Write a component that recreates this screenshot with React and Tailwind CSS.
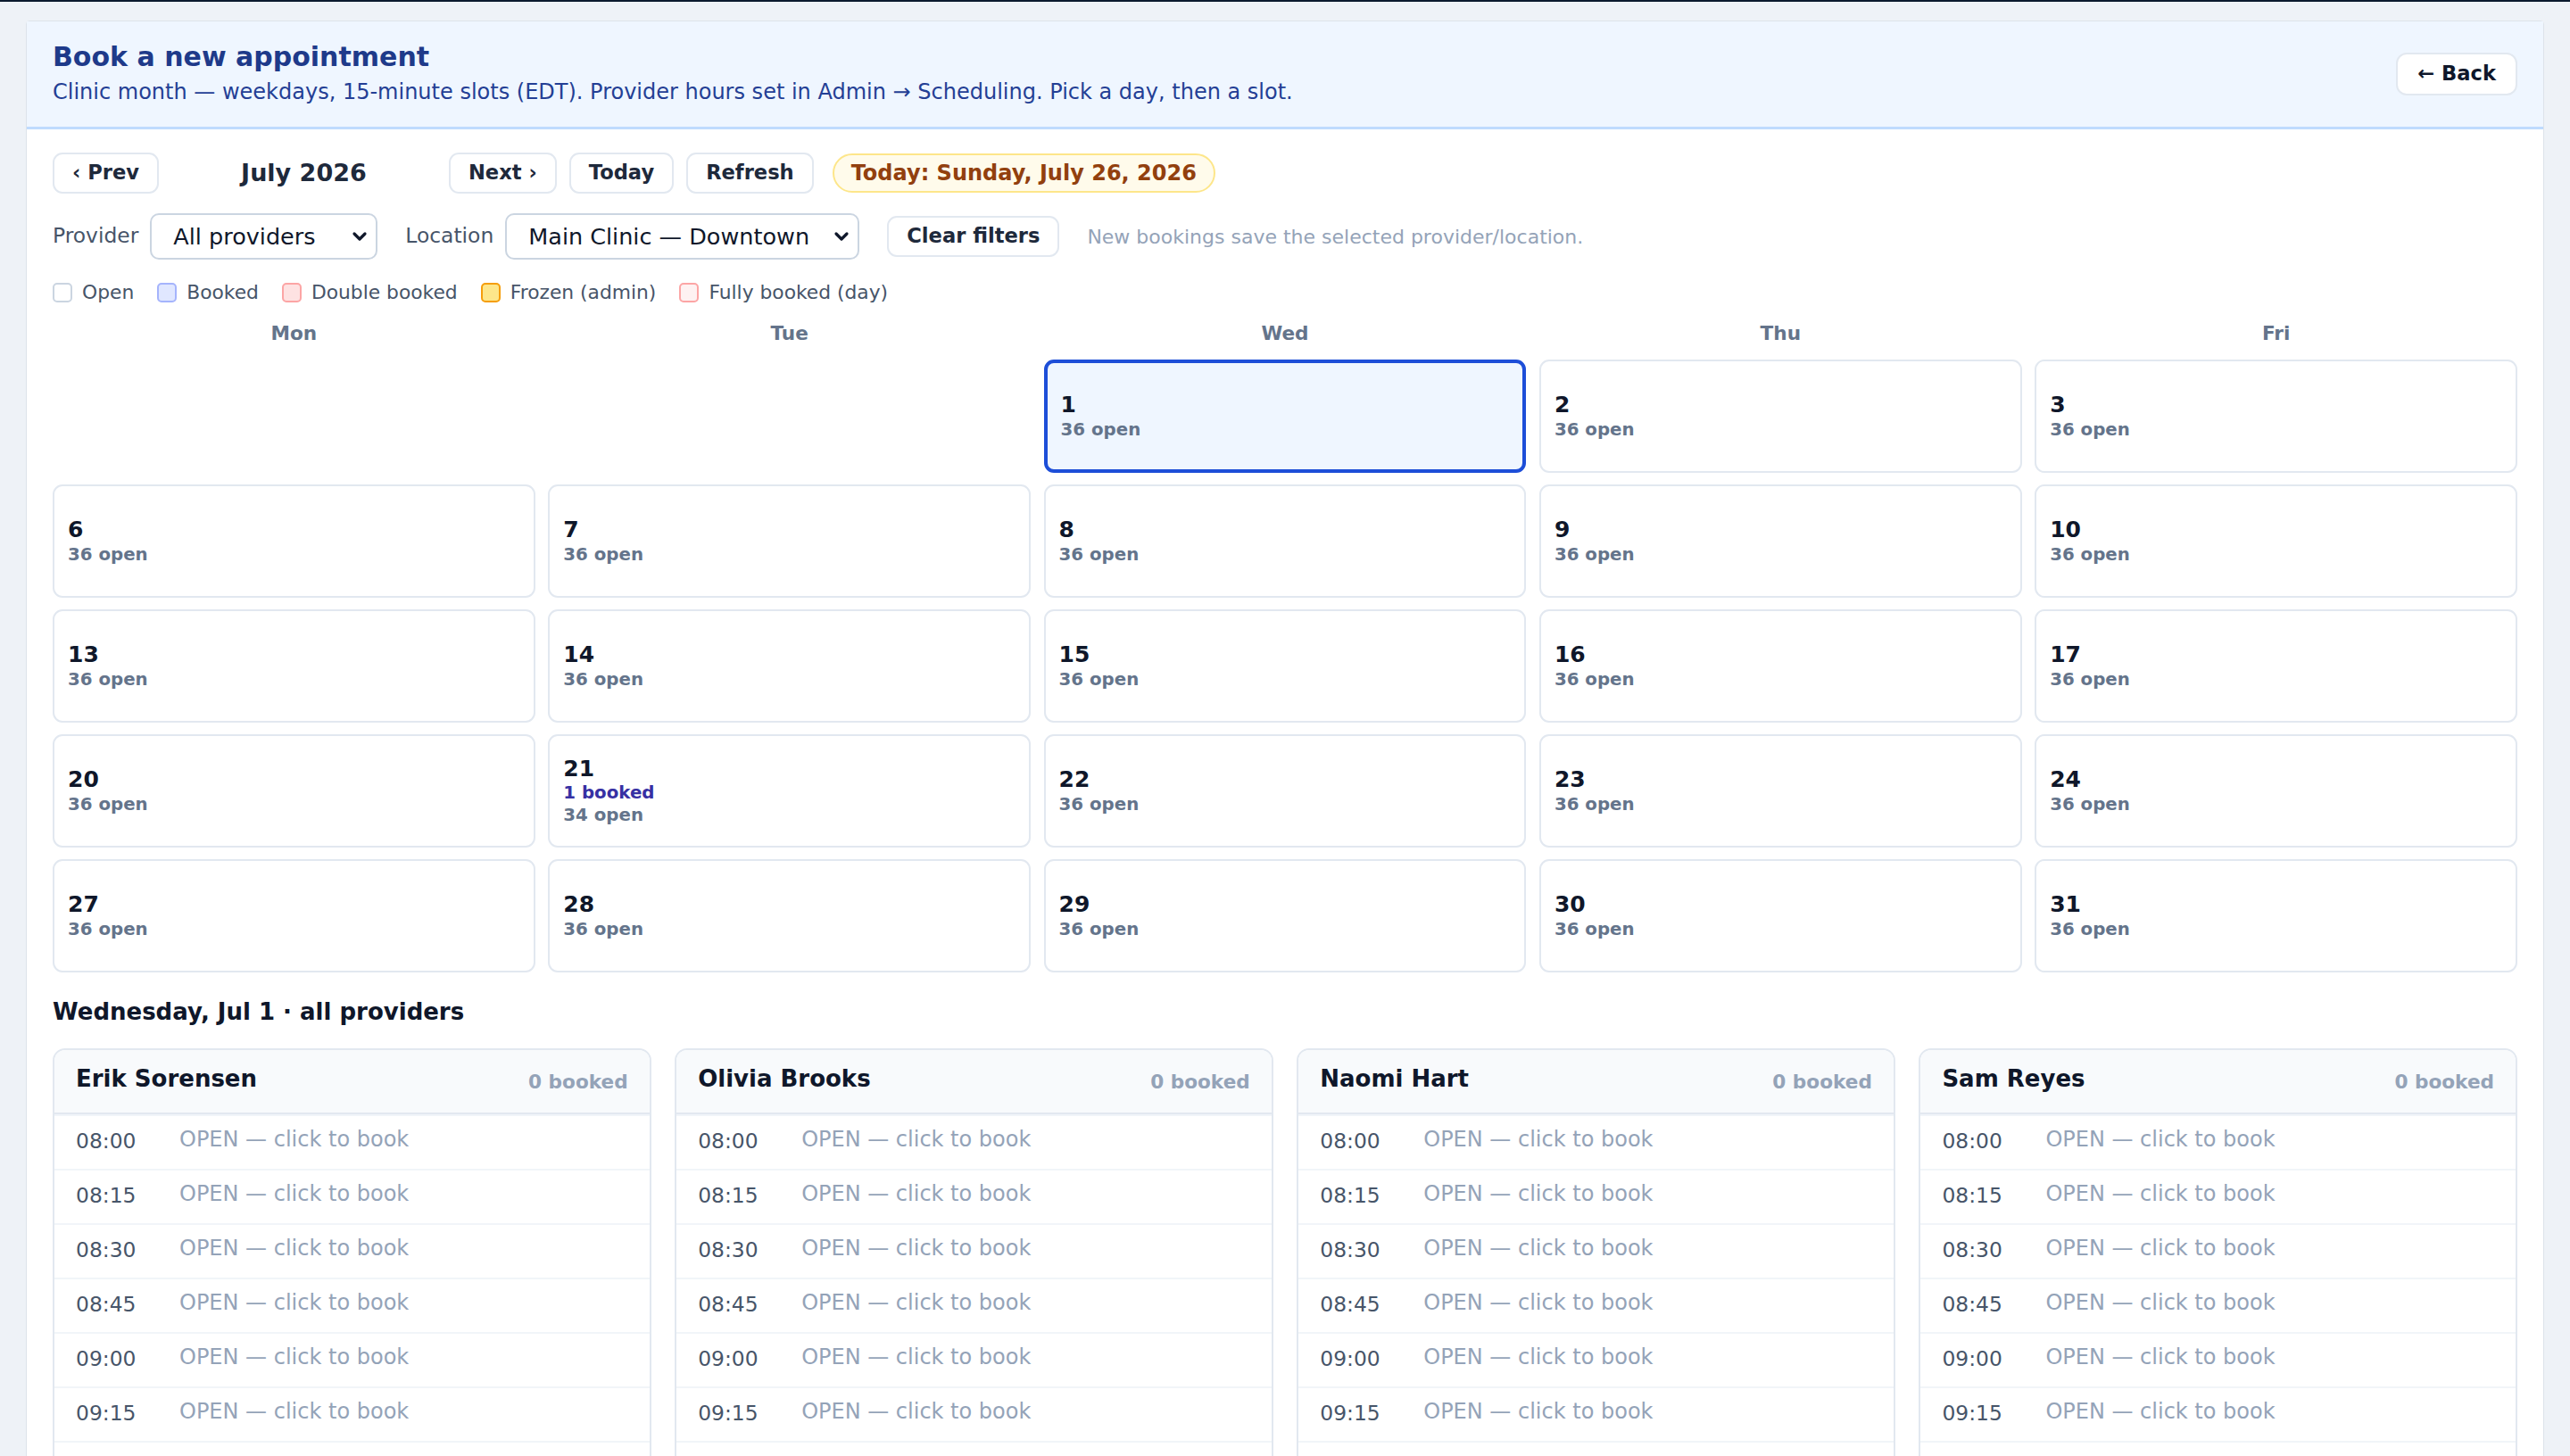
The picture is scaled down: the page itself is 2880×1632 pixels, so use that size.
import { useState } from "react";

const weeks = [
  [null, null, 1, 2, 3],
  [6, 7, 8, 9, 10],
  [13, 14, 15, 16, 17],
  [20, 21, 22, 23, 24],
  [27, 28, 29, 30, 31],
];

const dayNames = ["Mon", "Tue", "Wed", "Thu", "Fri"];
const providers = ["Erik Sorensen", "Olivia Brooks", "Naomi Hart", "Sam Reyes"];

const slots = [];
for (let m = 8 * 60; m < 17 * 60; m += 15) {
  const h = String(Math.floor(m / 60)).padStart(2, "0");
  const mm = String(m % 60).padStart(2, "0");
  slots.push(`${h}:${mm}`);
}

function Chevron() {
  return (
    <svg width="20" height="14" viewBox="0 0 20 14" className="shrink-0">
      <polyline points="4,4 10,10 16,4" fill="none" stroke="#0f172a" strokeWidth="3.2" strokeLinecap="round" strokeLinejoin="round" />
    </svg>
  );
}

function Select({ value, className }) {
  return (
    <div className={`h-[52px] flex items-center justify-between pl-[24px] pr-[8px] border-2 border-[#cbd5e1] rounded-[10px] bg-white text-[25.5px] text-[#0f172a] ${className}`}>
      <span>{value}</span>
      <Chevron />
    </div>
  );
}

function Btn({ children }) {
  return (
    <button className="h-[46px] px-[20px] flex items-center border-2 border-[#e2e8f0] rounded-[11px] bg-white text-[22.6px] font-bold text-[#1e293b]">
      {children}
    </button>
  );
}

function Legend({ box, label }) {
  return (
    <div className="flex items-center gap-[11px]">
      <span className={`w-[22px] h-[22px] rounded-[5px] border-2 ${box}`} />
      <span className="text-[21.8px] text-[#475569]">{label}</span>
    </div>
  );
}

function DayCell({ day, selected, onPick }) {
  if (day === null) return <div />;
  const booked = day === 21 ? 1 : 0;
  const open = day === 21 ? 34 : 36;
  return (
    <button
      onClick={() => onPick(day)}
      className={`h-[127px] rounded-[11px] flex flex-col justify-center items-start text-left px-[15px] ${
        selected ? "border-[4px] border-[#1d4ed8] bg-[#eff6ff] px-[13px]" : "border-2 border-[#e2e8f0] bg-white"
      }`}
    >
      <span className="text-[25px] font-bold leading-[30px] text-[#0f172a]">{day}</span>
      {booked > 0 && (
        <span className="text-[19.8px] font-bold leading-[24px] text-[#3730a3]">{booked} booked</span>
      )}
      <span className="text-[19.8px] font-bold leading-[25px] text-[#64748b]">{open} open</span>
    </button>
  );
}

function ProviderCard({ name }) {
  return (
    <div className="border-2 border-[#e2e8f0] rounded-[14px] bg-white overflow-hidden">
      <div className="h-[72px] flex items-center justify-between px-[24px] bg-[#f8fafc] border-b-2 border-[#e2e8f0]">
        <span className="text-[26px] font-bold text-[#0f172a] pb-[6px]">{name}</span>
        <span className="text-[21.6px] font-bold text-[#94a3b8] mt-[2px]">0 booked</span>
      </div>
      {slots.map((t) => (
        <div key={t} className="h-[61px] flex items-start pt-[8px] px-[24px] border-t-2 border-[#f1f5f9]">
          <span className="w-[116px] shrink-0 text-[23.4px] text-[#475569] mt-[3px]">{t}</span>
          <span className="text-[24px] text-[#94a3b8]">OPEN — click to book</span>
        </div>
      ))}
    </div>
  );
}

export default function App() {
  const [selected, setSelected] = useState(1);

  return (
    <div className="min-h-screen bg-[#eef2f7] font-['DejaVu_Sans',sans-serif]">
      <div className="h-[2px] bg-[#0b1a2e]" />
      <div className="px-[29px] pt-[21px]">
        <div className="bg-white border border-[#dde3ea] rounded-[4px]">
          <div className="flex items-center justify-between px-[29px] py-[22px] bg-[#eff6ff] border-b-[3px] border-[#bfdbfe]">
            <div>
              <h1 className="text-[30px] leading-[36px] font-bold text-[#1e3a8a]">Book a new appointment</h1>
              <p className="mt-[4px] text-[24px] leading-[34px] text-[#243f95]">
                Clinic month — weekdays, 15-minute slots (EDT). Provider hours set in Admin → Scheduling. Pick a day, then a slot.
              </p>
            </div>
            <button className="h-[48px] px-[22px] flex items-center border-2 border-[#e2e8f0] rounded-[12px] bg-white text-[22.6px] font-bold text-[#0f172a]">
              ← Back
            </button>
          </div>

          <div className="px-[29px] pt-[26px] pb-[40px]">
            <div className="flex items-center gap-[14px]">
              <Btn>‹ Prev</Btn>
              <div className="w-[297px] text-center text-[27px] font-bold text-[#1e293b]">July 2026</div>
              <Btn>Next ›</Btn>
              <Btn>Today</Btn>
              <Btn>Refresh</Btn>
              <div className="ml-[7px] h-[44px] px-[19px] flex items-center rounded-full border-2 border-[#fde68a] bg-[#fffbeb] text-[24px] font-bold text-[#92400e]">
                Today: Sunday, July 26, 2026
              </div>
            </div>

            <div className="mt-[22px] flex items-center gap-[31px]">
              <div className="flex items-center gap-[13px]">
                <span className="text-[23.4px] text-[#475569]">Provider</span>
                <Select value="All providers" className="w-[255px]" />
              </div>
              <div className="flex items-center gap-[13px]">
                <span className="text-[23.4px] text-[#475569]">Location</span>
                <Select value="Main Clinic — Downtown" className="w-[397px]" />
              </div>
              <Btn>Clear filters</Btn>
              <span className="text-[22px] text-[#94a3b8]">New bookings save the selected provider/location.</span>
            </div>

            <div className="mt-[22px] flex items-center gap-[26px] h-[30px]">
              <Legend box="bg-white border-[#cbd5e1]" label="Open" />
              <Legend box="bg-[#e0e7ff] border-[#a5b4fc]" label="Booked" />
              <Legend box="bg-[#fee2e2] border-[#fca5a5]" label="Double booked" />
              <Legend box="bg-[#fde68a] border-[#f59e0b]" label="Frozen (admin)" />
              <Legend box="bg-[#fef2f2] border-[#fca5a5]" label="Fully booked (day)" />
            </div>

            <div className="mt-[16px] grid grid-cols-5 gap-x-[14.5px]">
              {dayNames.map((d) => (
                <div key={d} className="h-[30px] flex items-center justify-center text-[21.6px] font-bold text-[#64748b]">
                  {d}
                </div>
              ))}
            </div>

            <div className="mt-[14px] grid grid-cols-5 gap-x-[14.5px] gap-y-[13px]">
              {weeks.flat().map((d, i) => (
                <DayCell key={i} day={d} selected={d === selected} onPick={setSelected} />
              ))}
            </div>

            <h2 className="mt-[27px] text-[26px] leading-[34px] font-bold text-[#0f172a]">
              Wednesday, Jul 1 · all providers
            </h2>

            <div className="mt-[24px] grid grid-cols-4 gap-[26.5px]">
              {providers.map((p) => (
                <ProviderCard key={p} name={p} />
              ))}
            </div>
          </div>
        </div>
      </div>
    </div>
  );
}
